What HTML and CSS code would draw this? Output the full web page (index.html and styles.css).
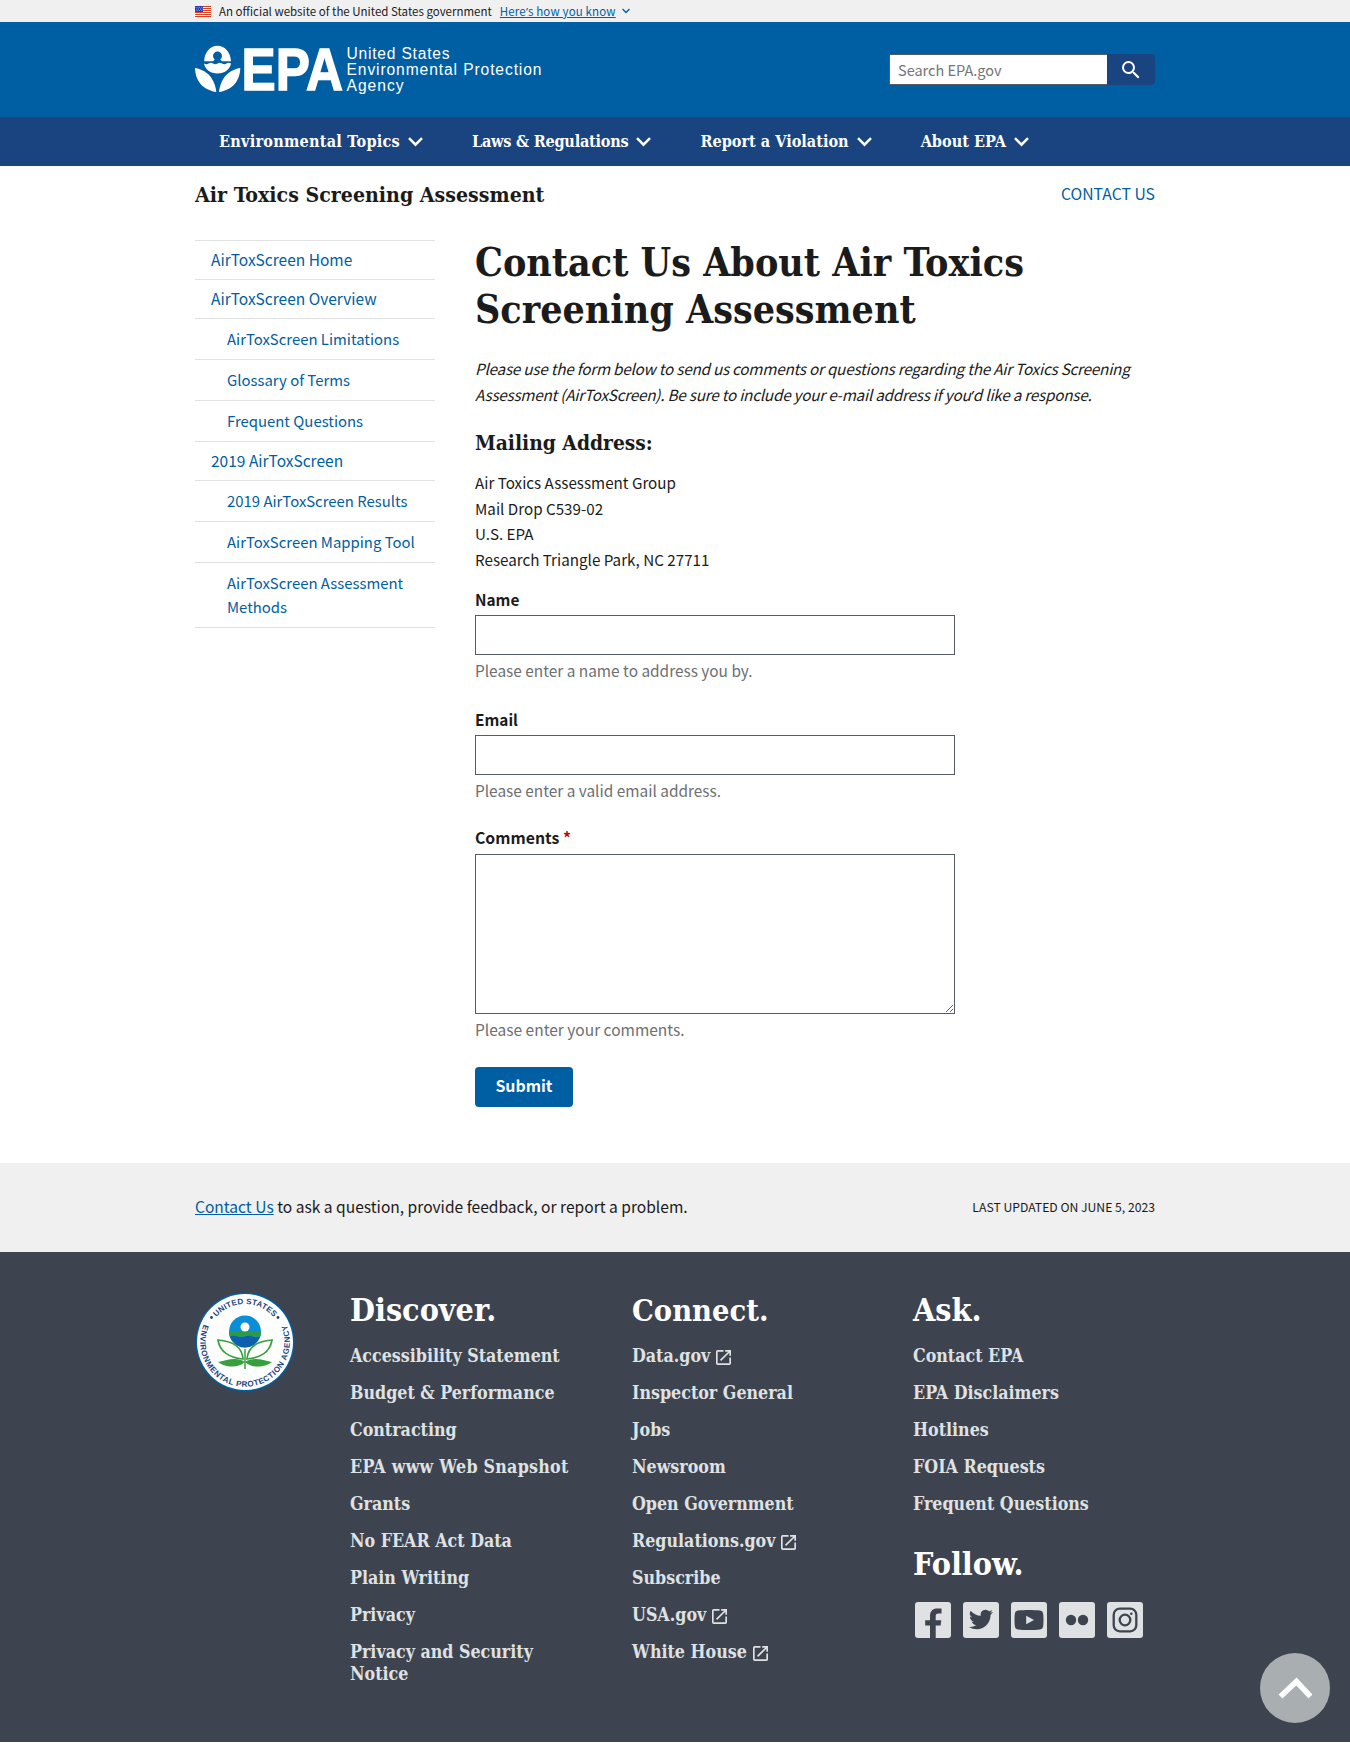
FILE: index.html
```html
<!DOCTYPE html>
<html lang="en">
<head>
<meta charset="utf-8">
<title>Contact Us About Air Toxics Screening Assessment | US EPA</title>
<link rel="stylesheet" href="styles.css">
</head>
<body>
<svg width="0" height="0" class="sprite" aria-hidden="true">
  <symbol id="chevron" viewBox="0 0 15 10"><path d="M1 1.200l6.500 6.500 6.500-6.500" fill="none" stroke="currentColor" stroke-width="2.500"/></symbol>
  <symbol id="launch" viewBox="3 3 18 18"><path fill="currentColor" d="M19 19H5V5h7V3H5a2 2 0 0 0-2 2v14a2 2 0 0 0 2 2h14c1.100 0 2-.9 2-2v-7h-2v7zM14 3v2h3.590l-9.830 9.830 1.410 1.410L19 6.410V10h2V3h-7z"/></symbol>
</svg>

<div class="banner"><div class="wrap banner-row">
  <svg class="flag" viewBox="0 0 16 11"><path fill="#fff" d="M0 0h16v11H0z"/><path stroke="#db3e1f" stroke-width="1" d="M0 .5h16M0 2.500h16M0 4.500h16M0 6.500h16M0 8.500h16M0 10.500h16"/><path fill="#1e33b1" d="M0 0h8v6H0z"/><path stroke="#fff" stroke-width=".7" stroke-dasharray=".8 1" d="M.7 1.300H8M1.400 3H8M.7 4.700H8"/></svg>
  <span class="banner-text">An official website of the United States government</span>
  <a class="banner-link" href="#">Here<span class="apos">’</span>s how you know</a>
  <svg class="banner-chevron"><use href="#chevron"/></svg>
</div></div>

<header class="header"><div class="wrap header-row">
  <svg class="logo" viewBox="0 0 350 54" role="img" aria-label="EPA">
    <g fill="#fff">
      <path d="M9.200 17.300C9.500 8.500 15 1.800 22.500 1.800S35.600 8.500 36 17.300H26.900L25.300 15.500a4.500 4.500 0 1 0-5.600 0L18.100 17.300z"/>
      <path d="M9 19.500q2.300 1.600 4.600 0 2.200-1.500 4.500 0 2.200 1.600 4.500 0 2.200-1.500 4.500 0 2.200 1.600 4.400 0 2.200-1.500 4.500 0C35 25.500 29.500 29.500 22.500 29.500S10 25.500 9 19.500z"/>
      <path d="M0 24c9.500 1.500 19.500 8 21.300 24C11 46.500.5 40 0 24z"/>
      <path d="M45.300 24c-9.500 1.500-19.500 8-21.300 24 10.300-1.500 20.800-8 21.300-24z"/>
      <text class="logo-epa" x="46.500" y="46.300" textLength="101.500" lengthAdjust="spacingAndGlyphs">EPA</text>
    </g>
    <g class="logo-name">
      <text x="151.500" y="14.500" textLength="103">United States</text>
      <text x="151.500" y="30.700" textLength="195">Environmental Protection</text>
      <text x="151.500" y="46.900" textLength="57">Agency</text>
    </g>
  </svg>
  <form class="search">
    <input class="search-input" type="text" placeholder="Search EPA.gov">
    <button class="search-button" type="button" aria-label="Search"><svg viewBox="3 3 18 18"><path fill="#fff" d="M15.500 14h-.79l-.28-.27A6.470 6.470 0 0 0 16 9.500 6.500 6.500 0 1 0 9.500 16c1.610 0 3.090-.59 4.230-1.570l.27.28v.79l5 4.990L20.490 19l-4.990-5zm-6 0C7.010 14 5 11.990 5 9.500S7.010 5 9.500 5 14 7.010 14 9.500 11.990 14 9.500 14z"/></svg></button>
  </form>
</div></header>

<nav class="nav"><div class="wrap nav-row">
  <a class="nav-item topics" href="#">Environmental Topics<svg><use href="#chevron"/></svg></a>
  <a class="nav-item laws" href="#">Laws &amp; Regulations<svg><use href="#chevron"/></svg></a>
  <a class="nav-item" href="#">Report a Violation<svg><use href="#chevron"/></svg></a>
  <a class="nav-item" href="#">About EPA<svg><use href="#chevron"/></svg></a>
</div></nav>

<div class="wrap title-row">
  <div class="site-title">Air Toxics Screening Assessment</div>
  <a class="contact-link" href="#">CONTACT US</a>
</div>

<div class="wrap content">
  <aside class="sidenav">
    <a href="#">AirToxScreen Home</a>
    <a href="#">AirToxScreen Overview</a>
    <a class="sub" href="#">AirToxScreen Limitations</a>
    <a class="sub" href="#">Glossary of Terms</a>
    <a class="sub" href="#">Frequent Questions</a>
    <a href="#">2019 AirToxScreen</a>
    <a class="sub" href="#">2019 AirToxScreen Results</a>
    <a class="sub" href="#">AirToxScreen Mapping Tool</a>
    <a class="sub" href="#">AirToxScreen Assessment Methods</a>
  </aside>
  <main class="main">
    <h1>Contact Us About Air Toxics Screening Assessment</h1>
    <p class="intro">Please use the form below to send us comments or questions regarding the Air Toxics Screening Assessment (AirToxScreen). Be sure to include your e-mail address if you<span class="apos">’</span>d like a response.</p>
    <h2>Mailing Address:</h2>
    <p class="address">Air Toxics Assessment Group<br>Mail Drop C539-02<br>U.S. EPA<br>Research Triangle Park, NC 27711</p>
    <form class="form">
      <label for="name">Name</label>
      <input id="name" type="text">
      <p class="hint">Please enter a name to address you by.</p>
      <label for="email">Email</label>
      <input id="email" type="text">
      <p class="hint hint-email">Please enter a valid email address.</p>
      <label class="label-comments" for="comments">Comments <span class="required">*</span></label>
      <textarea id="comments"></textarea>
      <p class="hint hint-comments">Please enter your comments.</p>
      <button class="submit" type="button">Submit</button>
    </form>
  </main>
</div>

<div class="feedback"><div class="wrap feedback-row">
  <p class="feedback-text"><a href="#">Contact Us</a> to ask a question, provide feedback, or report a problem.</p>
  <p class="updated">LAST UPDATED ON JUNE 5, 2023</p>
</div></div>

<footer class="footer"><div class="wrap footer-grid">
  <svg class="seal" viewBox="-50 -50 100 100" role="img" aria-label="EPA seal">
    <defs>
      <path id="arc-top" d="M-38 0A38 38 0 0 1 38 0"/>
      <path id="arc-bottom" d="M-40.800 -18.500A44.800 44.800 0 1 0 40.800 -18.500"/>
    </defs>
    <circle r="49.500" fill="#005ea2"/><circle r="48" fill="#fff"/>
    <g class="seal-text">
      <text><textPath href="#arc-top" startOffset="50%" text-anchor="middle" textLength="65">UNITED STATES</textPath></text>
      <text><textPath href="#arc-bottom" startOffset="1" textLength="176">ENVIRONMENTAL PROTECTION AGENCY</textPath></text>
    </g>
    <circle cx="-33.500" cy="-24.500" r="1.400" fill="#1a4480"/><circle cx="33" cy="-24.500" r="1.400" fill="#1a4480"/>
    <circle cy="-10.500" r="16" fill="#0a8fd6"/>
    <path d="M-16-10.500h32a16 16 0 0 1-.8 5h-30.400a16 16 0 0 1-.8-5z" fill="#2e9c3c"/>
    <path d="M-15.200-5.500q3.500-1.500 7.600 0t7.600 0 7.600 0 7.600 0a16 16 0 0 1-30.400 0z" fill="#0e5fae"/>
    <circle cy="-15" r="4.500" fill="#fff"/>
    <g fill="#fff" stroke="#35a03c" stroke-width="1.700"><path d="M-2 17C-15 16-25 10-27-2-13-1-3 5-2 17z"/><path d="M2 17C15 16 25 10 27-2 13-1 3 5 2 17z"/></g>
    <path d="M0 20C-9 14-20 19-27 20c5 4 18 8 27 0 9 8 22 4 27 0-7-1-18-6-27 0z" fill="#35a03c"/>
    <path d="M0 7v20" stroke="#35a03c" stroke-width="1.500"/>
  </svg>
  <section class="col"><h2>Discover.</h2><ul>
    <li><a href="#">Accessibility Statement</a></li><li><a href="#">Budget &amp; Performance</a></li><li><a href="#">Contracting</a></li><li><a class="snapshot" href="#">EPA www Web Snapshot</a></li><li><a href="#">Grants</a></li><li><a href="#">No FEAR Act Data</a></li><li><a href="#">Plain Writing</a></li><li><a href="#">Privacy</a></li><li><a href="#">Privacy and Security Notice</a></li>
  </ul></section>
  <section class="col"><h2 class="connect">Connect.</h2><ul>
    <li><a href="#">Data.gov<svg><use href="#launch"/></svg></a></li><li><a href="#">Inspector General</a></li><li><a href="#">Jobs</a></li><li><a href="#">Newsroom</a></li><li><a href="#">Open Government</a></li><li><a href="#">Regulations.gov<svg><use href="#launch"/></svg></a></li><li><a href="#">Subscribe</a></li><li><a href="#">USA.gov<svg><use href="#launch"/></svg></a></li><li><a href="#">White House<svg><use href="#launch"/></svg></a></li>
  </ul></section>
  <section class="col"><h2>Ask.</h2><ul>
    <li><a href="#">Contact EPA</a></li><li><a href="#">EPA Disclaimers</a></li><li><a href="#">Hotlines</a></li><li><a href="#">FOIA Requests</a></li><li><a href="#">Frequent Questions</a></li>
  </ul>
  <h2 class="follow">Follow.</h2>
  <div class="social">
    <a href="#" aria-label="Facebook"><svg viewBox="0 0 36 36"><path fill="#3e444f" d="M15 36V23.500h-4.800v-5.300H15v-4.300C15 9 17.900 6.400 22.200 6.400c2 0 3.800.1 4.300.2v5h-3c-2.300 0-2.800 1.100-2.800 2.700v3.900h5.600l-.7 5.300h-4.900V36z"/></svg></a>
    <a href="#" aria-label="Twitter"><svg viewBox="0 0 36 36"><path fill="#3e444f" transform="translate(6 5.500)" d="M23.950 4.570a10 10 0 0 1-2.820.77 4.960 4.960 0 0 0 2.160-2.720c-.95.550-2 .95-3.130 1.180a4.920 4.920 0 0 0-8.380 4.480C7.690 8.100 4.070 6.130 1.640 3.160a4.920 4.920 0 0 0 1.520 6.570 4.900 4.900 0 0 1-2.230-.61v.06c0 2.380 1.700 4.370 3.950 4.830a5 5 0 0 1-2.210.08 4.940 4.940 0 0 0 4.600 3.420A9.870 9.870 0 0 1 0 19.540a13.990 13.990 0 0 0 7.550 2.210c9.050 0 14-7.500 14-13.980 0-.21 0-.42-.02-.63a9.940 9.940 0 0 0 2.460-2.550z"/></svg></a>
    <a href="#" aria-label="YouTube"><svg viewBox="0 0 36 36"><path fill="#3e444f" fill-rule="evenodd" d="M7 8.500C13 7.700 23 7.700 29 8.500c2 .3 3 1.500 3.200 3.500.4 4 .4 8 0 12-.2 2-1.200 3.200-3.200 3.500-6 .8-16 .8-22 0-2-.3-3-1.500-3.200-3.500-.4-4-.4-8 0-12C4 10 5 8.800 7 8.500zM15.200 13.700v8.600l7.800-4.300z"/></svg></a>
    <a href="#" aria-label="Flickr"><svg viewBox="0 0 36 36"><circle cx="12" cy="18" r="5.200" fill="#3e444f"/><circle cx="24" cy="18" r="5.200" fill="#3e444f"/></svg></a>
    <a href="#" aria-label="Instagram"><svg viewBox="0 0 36 36" fill="none" stroke="#3e444f" stroke-width="2.300"><rect x="6.700" y="6.700" width="22.600" height="22.600" rx="6"/><circle cx="18" cy="18" r="5.300"/><circle cx="24.300" cy="11.700" r="1.300" fill="#3e444f" stroke="none"/></svg></a>
  </div></section>
</div></footer>

<a class="to-top" href="#" aria-label="Back to top"><svg viewBox="0 0 34 22"><path d="M2.500 19.500L18.500 4.500l14 15" fill="none" stroke="#fff" stroke-width="5.500"/></svg></a>
</body>
</html>
```
FILE: styles.css
```css
* { box-sizing: border-box; }
body { margin: 0; background: #fff; color: #1b1b1b; font-family: "Noto Sans CJK SC", "Noto Sans", sans-serif; font-size: 15.3px; line-height: 24px; }
a { color: #005ea2; text-decoration: none; }
p, h1, h2, ul { margin: 0; padding: 0; }
ul { list-style: none; }
svg { display: block; }
.sprite { position: absolute; }
.apos { font-family: "Open Sans", sans-serif; line-height: 1; }
.wrap { width: 960px; margin: 0 auto; }

.banner { background: #f0f0f0; height: 22px; }
.banner-row { display: flex; align-items: center; height: 22px; font-size: 11.5px; line-height: 22px; }
.flag { width: 16px; height: 11px; margin-right: 8px; }
.banner-link { text-decoration: underline; margin-left: 8px; letter-spacing: .15px; }
.banner-chevron { width: 8px; height: 6px; margin-left: 6px; color: #005ea2; }

.header { background: #005ea2; }
.header-row { display: flex; justify-content: space-between; height: 95px; }
.logo { width: 350px; height: 54px; margin-top: 22px; }
.logo-epa { font: bold 60px "Liberation Sans", Arial, sans-serif; stroke: #fff; stroke-width: 1.5px; }
.logo-name { font: 15.600px "Liberation Sans", Arial, sans-serif; fill: #fff; }
.search { display: flex; margin-top: 32px; height: 31px; }
.search-input { width: 218px; height: 31px; border: 1px solid #565c65; border-right: 0; padding: 0 8px; background: #fff; font-family: inherit; font-size: 14.5px; }
.search-input::placeholder { color: #757575; }
.search-button { width: 48px; height: 31px; border: 0; border-radius: 0 4px 4px 0; background: #1a4480; padding: 0; display: flex; align-items: center; justify-content: center; }
.search-button svg { width: 18px; height: 18px; }

.nav { background: #1a4480; }
.nav-row { display: flex; gap: 49px; height: 49px; padding-left: 24px; }
.nav-item { display: flex; align-items: center; color: #fff; font: bold 16.1px/49px "DejaVu Serif Condensed", "DejaVu Serif", serif; white-space: nowrap; }
.nav-item svg { width: 15px; height: 10px; margin-left: 8px; }
.topics { letter-spacing: .24px; }
.laws { letter-spacing: -.23px; }

.title-row { display: flex; justify-content: space-between; align-items: center; height: 57px; }
.site-title { font: bold 21.15px/28px "DejaVu Serif Condensed", "DejaVu Serif", serif; }
.contact-link { font-size: 15.75px; margin-bottom: 2px; }

.content { display: flex; gap: 40px; padding: 17px 0 56px; }
.sidenav { width: 240px; border-top: 1px solid #dfe1e2; align-self: flex-start; font-size: 15.5px; }
.sidenav a { display: block; padding: 6px 8px 8px 16px; border-bottom: 1px solid #dfe1e2; }
.sidenav a.sub { padding: 7.5px 8px 8.5px 32px; font-size: 14.9px; }
.main { width: 680px; }
h1 { font: bold 39px/47px "DejaVu Serif Condensed", "DejaVu Serif", serif; margin-top: -1px; }
.intro { margin-top: 22px; line-height: 26px; font-style: italic; letter-spacing: -.24px; }
.main h2 { font: bold 20.8px/28px "DejaVu Serif Condensed", "DejaVu Serif", serif; margin-top: 22px; }
.address { margin-top: 13px; line-height: 25.7px; font-size: 15.2px; }
.form { display: flex; flex-direction: column; align-items: flex-start; padding-top: 14px; }
.form label { font-weight: bold; font-size: 15.4px; margin-bottom: 4px; }
.form .label-comments { font-size: 15.8px; }
.required { color: #b50909; }
.form input, .form textarea { width: 480px; height: 40px; border: 1px solid #565c65; border-radius: 0; background: #fff; }
.form textarea { height: 160px; }
.hint { color: #6d6f73; margin: 3px 0 25px; font-size: 15.4px; }
.hint-email { margin-bottom: 24px; }
.hint-comments { margin-bottom: 26px; font-size: 15.5px; }
.submit { width: 98px; height: 40px; border: 0; border-radius: 4px; background: #005ea2; color: #fff; font: bold 15.9px/38px "Noto Sans CJK SC", sans-serif; padding: 0 0 2px; }

.feedback { background: #f0f0f0; }
.feedback-row { display: flex; justify-content: space-between; align-items: center; height: 89px; }
.feedback-text { font-size: 15.57px; margin-bottom: 2px; }
.feedback-text a { text-decoration: underline; }
.updated { font-size: 12.2px; }

.footer { background: #3e444f; height: 490px; margin-bottom: 1px; }
.footer-grid { display: grid; grid-template-columns: 155px 282px 281px 242px; padding-top: 38px; }
.seal { width: 100px; height: 100px; margin-top: 2px; }
.seal-text { font: bold 8px "Liberation Sans", Arial, sans-serif; fill: #1a4480; }
.col h2 { font: bold 32px/40px "DejaVu Serif Condensed", "DejaVu Serif", serif; color: #fff; margin-bottom: 15px; }
.col .connect { font-size: 30.5px; }
.col ul { display: flex; flex-direction: column; gap: 15px; max-width: 230px; font: bold 17.7px/22px "DejaVu Serif Condensed", "DejaVu Serif", serif; }
.col li a { color: #dfe1e2; }
.col .snapshot { letter-spacing: .25px; }
.col li svg { display: inline-block; width: 15px; height: 15px; margin-left: 6px; vertical-align: -3px; }
.col .follow { margin: 29px 0 18px; }
.social { display: flex; gap: 12px; padding-left: 2px; }
.social a { width: 36px; height: 36px; border-radius: 3px; background: #dfe1e2; }
.to-top { position: fixed; right: 20px; bottom: 20px; width: 70px; height: 70px; border-radius: 50%; background: #a9aeb1; display: flex; align-items: center; justify-content: center; }
.to-top svg { width: 34px; height: 22px; }
```
